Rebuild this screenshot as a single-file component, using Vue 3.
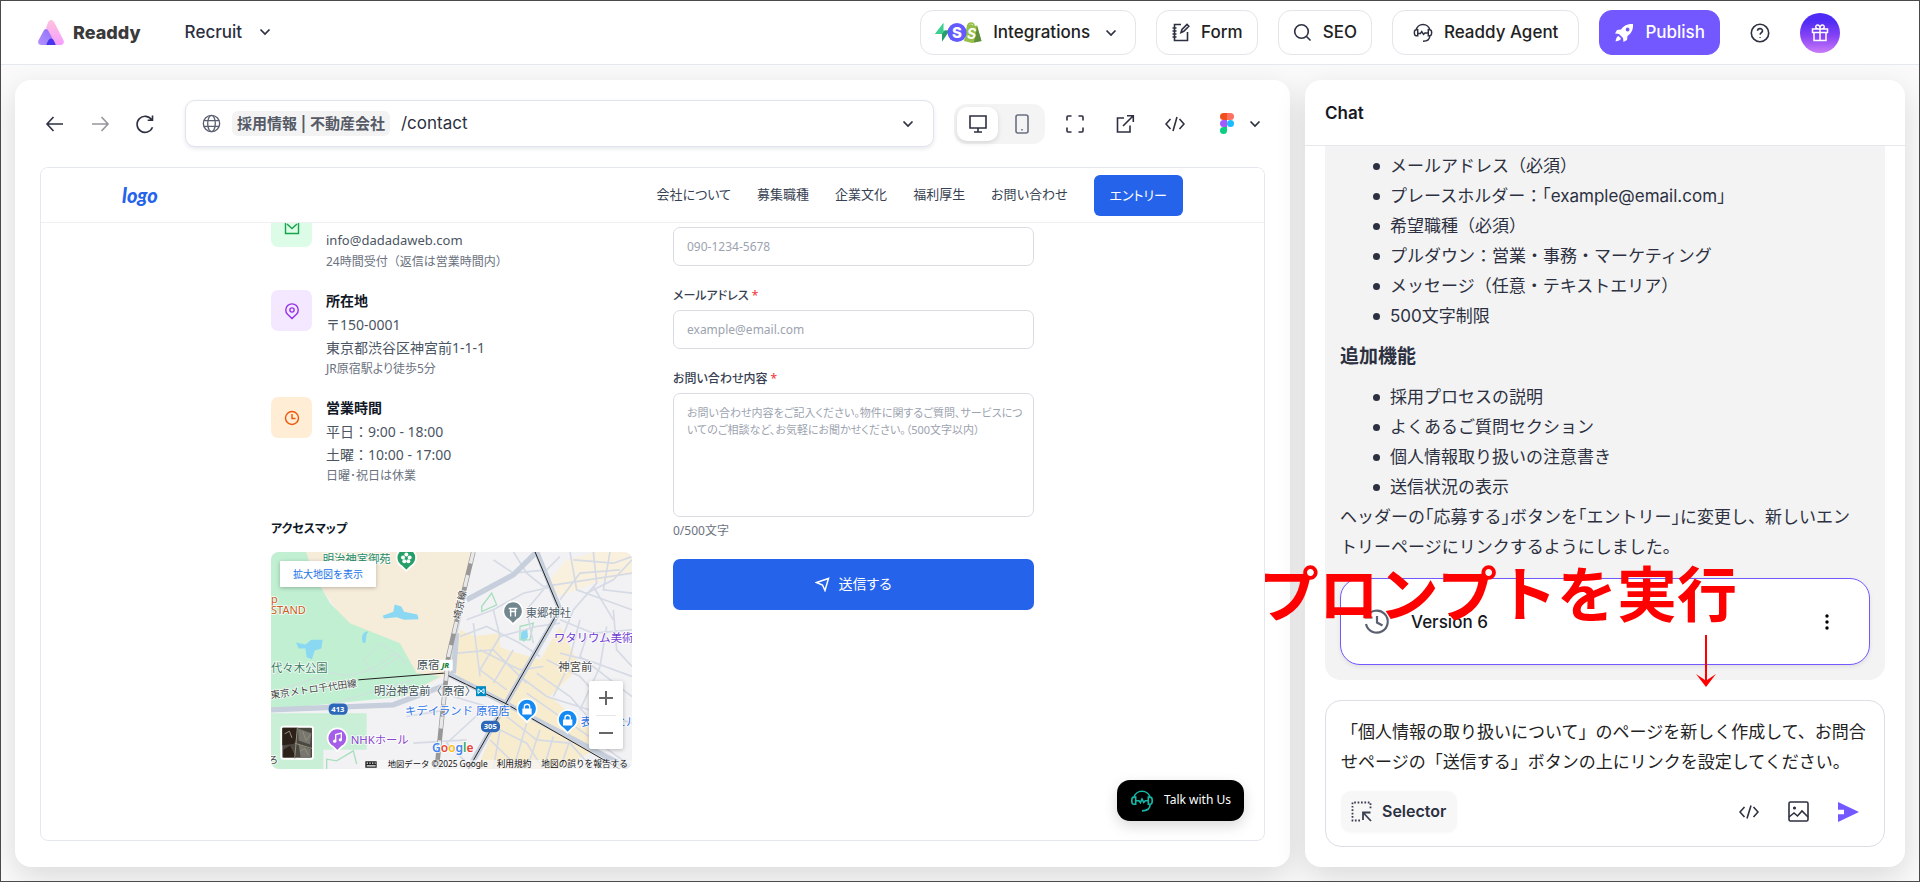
<script setup>
import { ref } from 'vue'

const prompt = ref('「個人情報の取り扱いについて」のページを新しく作成して、お問合せページの「送信する」ボタンの上にリンクを設定してください。')
const phone = ref('')
const email = ref('')
const message = ref('')

const nav = ['会社について', '募集職種', '企業文化', '福利厚生', 'お問い合わせ']
const formItems = ['メールアドレス（必須）', 'プレースホルダー：「example@email.com」', '希望職種（必須）', 'プルダウン：営業・事務・マーケティング', 'メッセージ（任意・テキストエリア）', '500文字制限']
const extras = ['採用プロセスの説明', 'よくあるご質問セクション', '個人情報取り扱いの注意書き', '送信状況の表示']

const streets = [
  'M640 126L600 330L560 490L530 778', 'M700 150L760 190L860 180L900 140', 'M760 126L800 190L850 230L1116 190',
  'M620 330L700 300L790 250L880 230', 'M930 126L950 240L1116 300', 'M1000 126L1010 220L940 300L900 400',
  'M1050 126L1030 240L1116 250', 'M1080 180L960 190L900 270', 'M600 380L680 350L780 400L840 440', 'M590 430L700 420L800 520',
  'M640 340L660 500', 'M700 300L720 380L660 480L740 540', 'M760 420L700 520', 'M900 330L1000 370L1116 360',
  'M900 430L980 450L1116 500', 'M960 330L920 480L880 560', 'M1040 350L1020 470L960 600', 'M860 450L960 500L1050 600',
  'M830 490L930 560L1000 640', 'M800 550L900 620L940 700', 'M780 500L860 560L1116 640', 'M700 650L800 700L850 778',
  'M740 620L830 690L930 700L1000 778', 'M690 690L780 778', 'M800 640L760 778', 'M840 660L800 778', 'M880 680L850 778',
  'M930 690L900 778', 'M580 560L680 590L560 700L640 778', 'M440 620L560 600', 'M460 700L620 690', 'M1060 300L1070 420L1116 470',
  'M1116 150L1060 210L980 250', 'M660 420L780 480L850 470', 'M720 380L830 350L900 340', 'M980 380L960 440L1116 560',
  'M850 240L800 300L820 400', 'M1000 230L1060 330', 'M940 150L1060 160L1116 140', 'M930 640L1116 770', 'M720 660L700 778'
]
</script>

<template>
  <div class="app">
    <header class="topbar">
      <a class="brand" href="#">
        <svg width="26" height="25" viewBox="0 0 26 25">
          <defs>
            <linearGradient id="lgPink" x1="0" y1="0" x2="0" y2="1"><stop offset="0" stop-color="#ffc2dd" /><stop offset="1" stop-color="#f59dff" /></linearGradient>
            <linearGradient id="lgVio" x1="0" y1="1" x2="1" y2="0"><stop offset="0" stop-color="#b592ff" /><stop offset="1" stop-color="#8b6cf6" /></linearGradient>
          </defs>
          <path d="M13 0c1.600 0 2.600 1 3.400 2.600l9 17.500c1.200 2.700-.2 4.900-2.800 4.900H18L8 8l2-5.400C10.600 1 11.600 0 13 0z" fill="url(#lgPink)" />
          <path d="M8 9c1.200 0 1.900.8 2.500 1.900L18 25H3.400C.7 25-.6 22.800.5 20.200l5-9.200C6.100 9.800 6.900 9 8 9z" fill="url(#lgVio)" />
          <path d="M13 18.500c2.200 0 3.400 3 4.700 6.500H8.300C9.600 21.500 10.800 18.500 13 18.500z" fill="#4a34ee" />
        </svg>
        <span>Readdy</span>
      </a>
      <button class="plain project">Recruit
        <svg class="chev" width="12" height="8" viewBox="0 0 12 8"><path d="M1.500 1.500L6 6l4.500-4.500" /></svg>
      </button>
      <div class="actions">
        <button class="pill">
          <svg width="47" height="21" viewBox="0 0 47 21">
            <path d="M8.500 1L0 12h6.500z" fill="#4ddba0" /><path d="M8.500 1L0 12h7V19.500l7.500-11H8.500z" fill="#3ecf8e" /><path d="M7 19.500L14.500 8.500H10L7 12z" fill="#259d6c" />
            <path d="M32 3l4-1 3 2 3-.5L46.500 19 37 21 29 19z" fill="#95bf47" /><path d="M42 3.500L46.500 19 39 20.500z" fill="#5e8e3e" />
            <path d="M33 4c0-4 6-4 6 0" fill="none" stroke="#95bf47" stroke-width="1.500" />
            <text x="32" y="17" font-size="14" font-weight="700" font-style="italic" fill="#fff">S</text>
            <circle cx="22" cy="10.500" r="9.500" fill="#635bff" />
            <text x="17" y="16" font-size="15" font-weight="800" fill="#fff">S</text>
          </svg>
          Integrations
          <svg class="chev end" width="12" height="8" viewBox="0 0 12 8"><path d="M1.500 1.500L6 6l4.500-4.500" /></svg>
        </button>
        <button class="pill">
          <svg class="ln" width="19" height="19" viewBox="0 0 19 19"><path d="M10 1.500H3.500v16h13V9M1.500 5h4M1.500 8h4M1.500 11h4M1.500 14h4M10 9.500l1-3 5-5 1.800 1.800-5 5z" /></svg>
          Form
        </button>
        <button class="pill">
          <svg class="ln" width="19" height="19" viewBox="0 0 19 19"><circle cx="8.500" cy="8.500" r="6.800" /><path d="M13.500 13.500l4 4" /></svg>
          SEO
        </button>
        <button class="pill agent">
          <svg class="ln" width="20" height="20" viewBox="0 0 22 22"><path d="M3.500 8a7.600 7.600 0 0 1 15 0M3.500 7.500C.8 7.500.8 14 3.500 14h1.700V7.500zM18.500 7.500c2.700 0 2.700 6.500 0 6.500h-1.700V7.500zM18.500 14c0 4-3 6-7.500 6M5.200 11.500h3l1.400-2 2 3 1.500-1.500h3.700" /></svg>
          Readdy Agent
        </button>
        <button class="pill publish">
          <svg width="20" height="20" viewBox="0 0 20 20" fill="#fff"><path fill-rule="evenodd" d="M19 1c-6-.5-9.500 2-12 5.500L3 7 1 10.500l4 .5 4 4 .5 4L13 17l.5-4C17 10.500 19.500 7 19 1zM13.600 4.600a1.900 1.900 0 1 1 0 3.800 1.900 1.900 0 0 1 0-3.800z" /><path d="M4.500 13C2.500 13.500 2 16 1.500 18.500 4 18 6.500 17.500 7 15.500z" /></svg>
          Publish
        </button>
        <button class="plain help" aria-label="Help">
          <svg class="ln" width="20" height="20" viewBox="0 0 20 20"><circle cx="10" cy="10" r="8.700" /><path d="M7.500 7.800c.2-3 5.200-2.800 5 .1-.1 1.700-2.300 1.800-2.400 3.700M10.100 14v.8" /></svg>
        </button>
        <button class="plain gift" aria-label="Rewards">
          <svg width="18" height="18" viewBox="0 0 18 18" fill="none" stroke="#fff" stroke-width="1.500"><path d="M1.500 5h15v3.500h-15zM3 8.500v8h12v-8M9 5v11.500M9 5C3 5 4.500 1 6.500 1S9 3 9 5c0-2 .5-4 2.500-4S15 5 9 5z" /></svg>
        </button>
      </div>
    </header>

    <main class="workspace">
      <section class="card left">
        <div class="toolbar">
          <button class="plain" aria-label="Back"><svg class="ln" width="20" height="18" viewBox="0 0 20 18"><path d="M18 9H2M8.500 2L2 9l6.500 7" /></svg></button>
          <button class="plain dim" aria-label="Forward"><svg class="ln" width="20" height="18" viewBox="0 0 20 18"><path d="M2 9h16M11.500 2L18 9l-6.500 7" /></svg></button>
          <button class="plain" aria-label="Reload"><svg class="ln" width="20" height="20" viewBox="0 0 20 20"><path d="M17.500 13.300A8 8 0 1 1 16.800 6M17.500 1.500V6.300H12.700" /></svg></button>
          <button class="url">
            <svg class="ln globe" width="19" height="19" viewBox="0 0 20 20"><circle cx="10" cy="10" r="8.600" /><ellipse cx="10" cy="10" rx="4" ry="8.600" /><path d="M2 7h16M2 13h16" /></svg>
            <span class="chip">採用情報 | 不動産会社</span>
            <span>/contact</span>
            <svg class="chev end" width="12" height="8" viewBox="0 0 12 8"><path d="M1.500 1.500L6 6l4.500-4.500" /></svg>
          </button>
          <div class="seg">
            <button class="plain on" aria-label="Desktop"><svg class="ln" width="20" height="20" viewBox="0 0 20 20"><path d="M2 2h16v12H2zM10 14v4M6 18h8" /></svg></button>
            <button class="plain" aria-label="Mobile"><svg class="ln grey" width="20" height="20" viewBox="0 0 20 20"><rect x="4" y="1" width="12" height="18" rx="2" /><path d="M10 15v1.500" /></svg></button>
          </div>
          <div class="tools">
            <button class="plain" aria-label="Full screen"><svg class="ln" width="20" height="20" viewBox="0 0 20 20"><path d="M2 6.500V3a1 1 0 0 1 1-1h3.500M13.500 2H17a1 1 0 0 1 1 1v3.500M18 13.500V17a1 1 0 0 1-1 1h-3.500M6.500 18H3a1 1 0 0 1-1-1v-3.500" /></svg></button>
            <button class="plain" aria-label="Open"><svg class="ln" width="20" height="20" viewBox="0 0 20 20"><path d="M9 4H2.500v14H15v-6.500M12 1.700h6.300V8M18 2L8 12" /></svg></button>
            <button class="plain" aria-label="Code"><svg class="ln" width="20" height="20" viewBox="0 0 20 20"><path d="M5.500 5L1 10l4.500 5M14.500 5l4.500 5-4.500 5M12 3L8 17" /></svg></button>
            <button class="plain figma" aria-label="Figma">
              <svg width="14" height="21" viewBox="0 0 14 21"><path d="M7 0H3.500a3.500 3.500 0 0 0 0 7H7z" fill="#f24e1e" /><path d="M7 0h3.500a3.500 3.500 0 0 1 0 7H7z" fill="#ff7262" /><path d="M7 7H3.500a3.500 3.500 0 0 0 0 7H7z" fill="#a259ff" /><circle cx="10.500" cy="10.500" r="3.500" fill="#1abcfe" /><path d="M7 14H3.500A3.500 3.500 0 1 0 7 17.500z" fill="#0acf83" /></svg>
              <svg class="chev" width="12" height="8" viewBox="0 0 12 8"><path d="M1.500 1.500L6 6l4.500-4.500" /></svg>
            </button>
          </div>
        </div>

        <div class="preview">
          <div class="site-head">
            <a class="site-logo" href="#">logo</a>
            <nav>
              <a v-for="n in nav" :key="n" href="#">{{ n }}</a>
              <a class="entry" href="#">エントリー</a>
            </nav>
          </div>
          <div class="site-body">
            <div class="info">
              <div class="item">
                <span class="tile green"><svg width="18" height="18" viewBox="0 0 18 18"><path d="M2.500 2.500h13v13h-13zM4 6l5 4.500L14 6" /></svg></span>
                <div class="untitled"><p>info@dadadaweb.com</p><small>24時間受付（返信は営業時間内）</small></div>
              </div>
              <div class="item">
                <span class="tile violet"><svg width="18" height="18" viewBox="0 0 18 18"><path d="M4.500 12.300a6.200 6.200 0 1 1 9 0L9 16.500z" /><circle cx="9" cy="8" r="2.100" /></svg></span>
                <div><h4>所在地</h4><p>〒150-0001<br>東京都渋谷区神宮前1-1-1</p><small class="kana">JR原宿駅より徒歩5分</small></div>
              </div>
              <div class="item">
                <span class="tile orange"><svg width="18" height="18" viewBox="0 0 18 18"><circle cx="9" cy="9" r="6.500" /><path d="M9 5v4.500h3.500" /></svg></span>
                <div><h4>営業時間</h4><p>平日：9:00 - 18:00<br>土曜：10:00 - 17:00</p><small class="kana">日曜･祝日は休業</small></div>
              </div>
              <h3 class="kana">アクセスマップ</h3>
              <div class="map">
                <svg class="canvas" viewBox="33 126 1083 652" preserveAspectRatio="xMidYMid slice">
                  <rect x="33" y="126" width="1083" height="652" fill="#f2f2f5" />
                  <path d="M130 126H640L570 490L430 560L430 450L250 330L180 230z" fill="#f6ecda" />
                  <path d="M33 126H138L160 190L210 280L270 340L420 400L470 490L540 500L430 560L33 600z" fill="#c0efd2" />
                  <path d="M33 610H320V720H190V778H33z" fill="#c9f0d7" />
                  <path d="M600 360L740 420L840 450L900 350L960 470L870 560L1040 700L900 778H650L730 590L570 480z" fill="#f8ecce" />
                  <path d="M860 220L920 150L1010 126H1116V190L1000 220L900 260z" fill="#faf0d8" opacity=".8" />
                  <path d="M630 380L720 370L720 420L860 480L800 570L640 520z" fill="#f8ecce" />
                  <path d="M368 318l32-12 4-22 20 6 8 16 40 8 4 14-44 2-22-8-38 4z M108 398l28 6 18-14 34 0-4 26-20 6-8 26-16-6-4-26-20 0z M306 385c0-14 10-22 20-20-10 8-6 20-10 34-8 2-10-6-10-14zM784 366l18-8 2 24-12 14-10-8z" fill="#8bd8f3" />
                  <g fill="none" stroke="#a8dfbe" stroke-width="4"><path d="M665 290l30-40 15 35-45 20zM780 350l40-10-10 50-30 0zM200 778v-30l30 5 50-30 10 40" /></g>
                  <g fill="none" stroke="#d4dde1" stroke-width="3"><path d="M40 500C140 420 200 520 300 490S400 390 440 470M310 450L360 400 420 440 340 490zM33 550L180 500 240 540M190 590L460 510" /></g>
                  <g fill="none" stroke="#d5dae4" stroke-width="5"><path v-for="(d, i) in streets" :key="i" :d="d" /></g>
                  <g fill="none" stroke="#c6cfdb" stroke-width="16"><path d="M33 600L400 585L560 525M620 270L760 195L830 126M830 126L900 300L735 585L625 778M560 490L735 580L1110 778M590 370L580 490" /></g>
                  <g fill="none" stroke="#222" stroke-width="3"><path d="M825 126L898 300L735 585L625 778M295 510L550 490L735 580L1080 778" /></g>
                  <path d="M640 126L605 270L565 440L530 778" fill="none" stroke="#989898" stroke-width="14" />
                  <path d="M640 126L605 270L565 440L530 778" fill="none" stroke="#e8e8e8" stroke-width="10" stroke-dasharray="36 36" />
                  <g class="lbl" font-size="34">
                    <text x="188" y="160" fill="#268c64">明治神宮御苑</text>
                    <text x="33" y="280" fill="#cc5c23" font-size="33">p</text><text x="33" y="313" fill="#cc5c23" font-size="33">STAND</text>
                    <text x="33" y="487" fill="#3b7d65">代々木公園</text>
                    <text x="470" y="477" fill="#3f5158">原宿</text>
                    <text x="342" y="555" fill="#3f5158">明治神宮前〈原宿〉</text>
                    <text x="797" y="322" fill="#51616b">東郷神社</text>
                    <text x="882" y="398" fill="#6e3bd1">ワタリウム美術</text>
                    <text x="895" y="485" fill="#4a4a4a">神宮前</text>
                    <text x="435" y="616" fill="#2f76e8">キデイランド 原宿店</text>
                    <text x="962" y="648" fill="#2f76e8">表参道ヒル</text>
                    <text x="272" y="702" fill="#8b45cf">NHKホール</text>
                    <text x="33" y="566" fill="#444" font-size="29" transform="rotate(-8 33 565)">東京メトロ千代田線</text>
                    <text x="600" y="330" fill="#444" font-size="29" transform="rotate(-77 600 330)">埼京線</text>
                    <text x="26" y="760" fill="#444" font-size="28">ろ</text>
                  </g>
                  <g stroke="#fff" stroke-width="5">
                    <path d="M439 183l-14-14a29 29 0 1 1 28 0z" fill="#259f68" /><path d="M759 343l-14-14a29 29 0 1 1 28 0z" fill="#73878f" />
                    <path d="M801 636l-14-14a29 29 0 1 1 28 0z" fill="#168af3" /><path d="M923 669l-14-14a29 29 0 1 1 28 0z" fill="#168af3" /><path d="M232 724l-14-14a29 29 0 1 1 28 0z" fill="#a55ee8" />
                  </g>
                  <g fill="#fff"><circle cx="439" cy="134" r="6" /><circle cx="429" cy="143" r="6" /><circle cx="449" cy="143" r="6" /><circle cx="433" cy="154" r="6" /><circle cx="445" cy="154" r="6" /><path d="M787 596h28v18h-28zM909 629h28v18h-28z" /></g>
                  <path d="M746 296h26M749 305h20M752 296v24M766 296v24M793 597v-7c0-9 16-9 16 0v7M915 630v-7c0-9 16-9 16 0v7M227 694v-20l17-4v19" fill="none" stroke="#fff" stroke-width="4" /><circle cx="224" cy="694" r="5" fill="#fff" /><circle cx="241" cy="690" r="5" fill="#fff" />
                  <rect x="540" y="450" width="38" height="32" fill="#fff" /><text x="545" y="475" font-size="23" font-weight="800" font-style="italic" fill="#14833b">JR</text>
                  <rect x="648" y="529" width="30" height="30" fill="#008bc5" /><path d="M654 537v14l9-7 9 7v-14l-9 7z" fill="none" stroke="#fff" stroke-width="3" />
                  <g font-size="23" font-weight="700" fill="#fff"><rect x="206" y="581" width="57" height="34" rx="14" fill="#2d68b8" /><text x="214" y="606">413</text><rect x="663" y="633" width="57" height="34" rx="14" fill="#2d68b8" /><text x="671" y="659">305</text></g>
                  <g class="lbl" font-size="36" font-weight="600"><text x="516" y="726"><tspan fill="#4285f4">G</tspan><tspan fill="#ea4335">o</tspan><tspan fill="#fbbc05">o</tspan><tspan fill="#4285f4">g</tspan><tspan fill="#34a853">l</tspan><tspan fill="#ea4335">e</tspan></text></g>
                  <rect x="300" y="750" width="816" height="28" fill="#f8f8f8" opacity=".65" />
                  <g fill="#222"><path fill-rule="evenodd" d="M316 754h34v20h-34zM320 758v4h4v-4zM328 758v4h4v-4zM336 758v4h4v-4zM344 758v4h3v-4zM320 766v4h27v-4z" /></g>
                  <g font-size="26" fill="#111"><text x="383" y="773" font-size="25">地図データ ©2025 Google</text><text x="710" y="773">利用規約</text><text x="844" y="773">地図の誤りを報告する</text></g>
                  <rect x="64" y="651" width="95" height="96" rx="6" fill="#4b4842" stroke="#fff" stroke-width="6" />
                  <path d="M67 654h46l-8 48-38 4zM70 720l20-12 18 34H70z" fill="#2b2119" /><path d="M114 656l40 14-4 34-34-12zM116 704l36 14v26h-30z" fill="#77766f" /><path d="M112 654l-8 92M104 700l52 16M74 672l14-8 8 20M128 664l10 28 14-18M120 724l14-8 12 20" fill="none" stroke="#94907a" stroke-width="3" />
                </svg>
                <a class="bigmap" href="#">拡大地図を表示</a>
                <div class="zoomer"><button class="plain" aria-label="Zoom in"><svg width="14" height="14" viewBox="0 0 14 14"><path d="M0 7h14M7 0v14" /></svg></button><button class="plain" aria-label="Zoom out"><svg width="14" height="14" viewBox="0 0 14 14"><path d="M0 7h14" /></svg></button></div>
              </div>
            </div>

            <form class="contact" @submit.prevent>
              <input v-model="phone" aria-label="Phone" placeholder="090-1234-5678">
              <label for="mail">メールアドレス <i>*</i></label>
              <input id="mail" v-model="email" type="email" placeholder="example@email.com">
              <label for="msg">お問い合わせ内容 <i>*</i></label>
              <textarea id="msg" v-model="message" placeholder="お問い合わせ内容をご記入ください。物件に関するご質問、サービスについてのご相談など、お気軽にお聞かせください。（500文字以内）"></textarea>
              <span class="count">0/500文字</span>
              <button class="submit"><svg width="15" height="15" viewBox="0 0 15 15" fill="none" stroke="#fff" stroke-width="1.500"><path d="M1.500 5.500L13.500 1.500 10 13.500 7.500 8z" /></svg>送信する</button>
            </form>
          </div>
          <button class="talk">
            <svg width="24" height="24" viewBox="0 0 22 22" fill="none" stroke="#14b8a6" stroke-width="1.500"><path d="M3.500 8a7.700 7.700 0 0 1 15 0M3.500 7.500C1 7.500 1 14 3.500 14h1.700V7.500zM18.500 7.500c2.500 0 2.500 6.500 0 6.500h-1.700V7.500zM18.500 14c0 4-3 6-7.500 6M5.200 10.800h3l1.300 1.700 1.500-3.200 1.600 3 1.500-1.500h2.700" /></svg>
            Talk with Us
          </button>
        </div>
      </section>

      <section class="card chat">
        <h2>Chat</h2>
        <div class="scroll">
          <article class="bubble">
            <ul>
              <li v-for="t in formItems" :key="t">
                <template v-for="(c, i) in t.split(/([「」])/)" :key="i"><span v-if="c === '「' || c === '」'" class="half">{{ c }}</span><template v-else>{{ c }}</template></template>
              </li>
            </ul>
            <h3>追加機能</h3>
            <ul><li v-for="t in extras" :key="t">{{ t }}</li></ul>
            <p>ヘッダーの<span class="half">「</span>応募する<span class="half">」</span>ボタンを<span class="half">「</span>エントリー<span class="half">」</span>に変更し、新しいエン<br>トリーページにリンクするようにしました。</p>
            <div class="version">
              <svg width="28" height="28" viewBox="0 0 28 28" fill="none" stroke="#5b6070" stroke-width="2.200"><path d="M4 8.500a11 11 0 1 1-1 7.500M3 3v6.500h6.500M14 8v6.500l5.500 3" /></svg>
              <span>Version 6</span>
              <button class="plain" aria-label="More"><svg width="4" height="16" viewBox="0 0 4 16"><circle cx="2" cy="2" r="1.700" /><circle cx="2" cy="8" r="1.700" /><circle cx="2" cy="14" r="1.700" /></svg></button>
            </div>
          </article>
        </div>
        <div class="composer">
          <textarea v-model="prompt" aria-label="Prompt" spellcheck="false"></textarea>
          <div class="row">
            <button class="selector">
              <svg width="21" height="21" viewBox="0 0 21 21" fill="none" stroke="#3a3f52" stroke-width="1.800"><path stroke-dasharray="1.700 1.700" d="M9 19.500H1.500V1.500H19.500V8" /><path d="M12 19v-7.500h7.500M12.500 12L20 20" /></svg>
              Selector
            </button>
            <button class="plain" aria-label="Insert code"><svg class="ln" width="20" height="20" viewBox="0 0 20 20"><path d="M5.500 5L1 10l4.500 5M14.500 5l4.500 5-4.500 5M12 3.500L8 16.500" /></svg></button>
            <button class="plain" aria-label="Insert image"><svg class="ln" width="21" height="21" viewBox="0 0 21 21"><rect x="1" y="1" width="19" height="19" rx="1.500" /><path d="M1 16l5-4 3.500 3 4.500-5 6 6" /><circle cx="6.500" cy="7" r=".8" /></svg></button>
            <button class="plain" aria-label="Send"><svg width="21" height="20" viewBox="0 0 21 20" fill="#7357ff"><path d="M0 0L21 10 0 20V12.200h6V7.800H0z" /></svg></button>
          </div>
        </div>
        <div class="callout">プロンプトを実行</div>
        <svg class="arrow" width="20" height="52" viewBox="0 0 20 52"><path d="M10 0v46" stroke="#f00" stroke-width="2" /><path d="M10 52L0 39l9 6h2l9-6z" fill="#f00" /></svg>
      </section>
    </main>
  </div>
</template>

<style>
body { overflow: hidden; }
</style>

<style scoped>
* { box-sizing: border-box; margin: 0; padding: 0; }
a { color: inherit; text-decoration: none; }
button, input, textarea { font: inherit; color: inherit; }
button { cursor: pointer; white-space: nowrap; }
svg { flex: none; display: block; }
.app { height: 100vh; display: flex; flex-direction: column; border: 1px solid #4a4a4a; background: #fafafa; color: #2c3040; font: 17px/1.2 Inter, "Noto Sans CJK JP", sans-serif; overflow: hidden; }
.plain { border: 0; background: none; display: flex; align-items: center; justify-content: center; }
.ln { fill: none; stroke: #2c3040; stroke-width: 1.600; }
.ln.grey { stroke: #6b7080; }
.chev { fill: none; stroke: #2c3040; stroke-width: 1.700; }
.end { margin-left: auto; }

.topbar { height: 64px; flex: none; display: flex; align-items: center; background: #fff; border-bottom: 1px solid #e6e8ef; padding: 0 79px 0 37px; }
.brand { display: flex; align-items: center; gap: 9px; font: 800 18px/24px Inter, sans-serif; color: #3a3a3a; }
.project { gap: 17px; margin-left: 44px; font-weight: 500; }
.actions { margin-left: auto; display: flex; align-items: center; gap: 20px; }
.pill { height: 45px; border: 1px solid #e4e5e9; border-radius: 13px; background: #fff; display: flex; align-items: center; gap: 11px; padding: 0 14px; font-size: 17px; font-weight: 500; color: #222; }
.pill .end { margin-left: 4px; margin-right: 4px; }
.pill.agent { padding: 0 20px; }
.publish { background: #7357ff; border-color: #7357ff; color: #fff; }
.help { width: 40px; height: 40px; }
.gift { width: 40px; height: 40px; border-radius: 50%; background: linear-gradient(#4f2bf5 20%, #8a45f5 60%, #c97bf8); }

.workspace { flex: 1; min-height: 0; display: grid; grid-template-columns: minmax(0, 1275fr) minmax(0, 600fr); gap: 15px; padding: 15px 14px 14px; }
.card { background: #fff; border-radius: 16px; box-shadow: 0 10px 30px rgba(0, 0, 0, .13); display: flex; flex-direction: column; min-height: 0; position: relative; }
.left { padding: 20px 25px 26px; }
.toolbar { display: flex; align-items: center; padding: 0 4px 0 5px; margin-bottom: 20px; gap: 25px; }
.dim { opacity: .5; }
.url { flex: 1; height: 47px; margin-left: 5px; border: 1px solid #dfe4ee; border-radius: 10px; background: #fff; box-shadow: 0 2px 4px rgba(30, 40, 80, .1); display: flex; align-items: center; gap: 11px; padding: 0 19px 0 16px; }
.url .globe { stroke: #5b6070; stroke-width: 1.400; }
.chip { background: #f3f3f4; border-radius: 6px; padding: 0 5px; font-size: 15px; line-height: 25px; font-weight: 600; color: #565a66; }
.seg { display: flex; background: #f4f4f5; border-radius: 12px; padding: 3px; gap: 3px; height: 40px; margin-left: -5px; }
.seg button { width: 41px; border-radius: 10px; }
.seg .on { background: #fff; box-shadow: 0 2px 5px rgba(0, 0, 0, .12); }
.tools { display: flex; align-items: center; gap: 30px; margin-left: -5px; }
.figma { gap: 15px; margin-left: 5px; }

.preview { flex: 1; min-height: 0; border: 1px solid #e5e8f0; border-radius: 8px; overflow: hidden; position: relative; font-family: "Noto Sans", "Noto Sans CJK JP", sans-serif; }
.site-head { position: relative; z-index: 1; height: 55px; margin-bottom: -17px; background: #fff; border-bottom: 1px solid #eff0f2; padding: 0 81px; display: flex; align-items: center; justify-content: space-between; }
.site-logo { color: #2563eb; font: italic 900 20px/24px Lato, cursive; }
.site-head nav { display: flex; align-items: center; gap: 26px; font-size: 13px; color: #374151; font-feature-settings: "palt"; }
.site-head .entry { background: #2563eb; color: #fff; border-radius: 6px; line-height: 41px; padding: 0 16px; }
.site-body { display: grid; grid-template-columns: 1fr 1fr; gap: 41px; padding: 0 230px; }
.item { display: flex; gap: 14px; margin-bottom: 20px; color: #4b5563; }
.untitled { padding-top: 22px; }
.tile { flex: none; width: 41px; height: 41px; border-radius: 7px; display: flex; align-items: center; justify-content: center; }
.tile svg { fill: none; stroke: currentColor; stroke-width: 1.400; }
.green { background: #dcfce7; color: #16a34a; }
.violet { background: #f3e8ff; color: #9333ea; }
.orange { background: #ffedd5; color: #ea580c; }
.item h4 { font-size: 14px; line-height: 22px; font-weight: 600; color: #111827; }
.item p { font-size: 14px; line-height: 23px; margin-top: 1px; }
.item .untitled p { font-size: 13px; }
.item small { display: block; font-size: 12px; line-height: 17px; margin-top: 1px; color: #6b7280; }
.kana { font-feature-settings: "palt"; }
.info h3 { font-size: 12px; line-height: 22px; font-weight: 600; color: #111827; margin: 34px 0 12px; }
.map { position: relative; height: 217px; border-radius: 8px; overflow: hidden; }
.canvas { width: 100%; height: 100%; }
.lbl text { stroke: #fff; stroke-width: 5; paint-order: stroke; stroke-opacity: .85; }
.bigmap { position: absolute; left: 9px; top: 9px; width: 96px; line-height: 26px; background: #fff; box-shadow: 0 1px 4px rgba(0, 0, 0, .25); text-align: center; color: #1a73e8; font-size: 10px; }
.zoomer { position: absolute; right: 9px; bottom: 20px; width: 34px; background: #fff; border-radius: 2px; box-shadow: 0 1px 4px rgba(0, 0, 0, .25); padding: 0 7px; }
.zoomer button { width: 20px; height: 34px; }
.zoomer button + button { border-top: 1px solid #e6e6e6; }
.zoomer svg { stroke: #666; stroke-width: 2; }
.contact { display: flex; flex-direction: column; padding-top: 21px; font-size: 12px; color: #374151; }
.contact label { line-height: 17px; margin: 21px 0 6px; font-weight: 500; font-feature-settings: "palt"; }
.contact i { color: #ef4444; font-style: normal; }
.contact input, .contact textarea { width: 100%; border: 1px solid #d9dde3; border-radius: 7px; padding: 0 13px; outline: 0; }
.contact input { height: 39px; }
.contact textarea { height: 124px; padding: 10px 8px 10px 13px; line-height: 17px; resize: none; overflow: hidden; font-size: 11px; font-feature-settings: "palt"; }
.contact ::placeholder { color: #9ca3af; opacity: 1; }
.count { line-height: 17px; margin: 5px 0 20px; color: #6b7280; }
.submit { height: 51px; border: 0; border-radius: 7px; background: #2563eb; color: #fff; font-size: 14px; display: flex; align-items: center; justify-content: center; gap: 8px; font-feature-settings: "palt"; }
.talk { position: absolute; right: 20px; bottom: 19px; height: 41px; border: 0; border-radius: 13px; background: #000; color: #fff; font-size: 12px; padding: 0 13px; display: flex; align-items: center; gap: 10px; box-shadow: 0 5px 14px rgba(0, 0, 0, .15); }

.chat { color: #2c3040; }
.chat h2 { font-size: 17px; line-height: 20px; font-weight: 600; color: #16181f; padding: 23px 20px 22px; border-bottom: 1px solid #e6e8ec; }
.scroll { flex: 1; min-height: 0; overflow: hidden; padding: 0 20px; display: flex; flex-direction: column; justify-content: flex-end; }
.bubble { background: #f3f3f4; border-radius: 0 0 16px 16px; padding: 15px; line-height: 30px; flex: none; }
.bubble ul { list-style: none; padding-left: 50px; }
.bubble li { position: relative; line-height: 30px; }
.bubble li::before { content: ""; position: absolute; left: -17px; top: 12px; width: 7px; height: 7px; border-radius: 50%; background: #2c3040; }
.bubble h3 { font-size: 19px; line-height: 30px; font-weight: 700; margin: 11px 0 10px; }
.half { font-feature-settings: "halt"; }
.version { margin-top: 16px; height: 87px; border: 1px solid #7357ff; border-radius: 20px; background: #fff; display: flex; align-items: center; gap: 20px; padding: 0 40px 0 22px; color: #15171e; font-weight: 500; box-shadow: 0 2px 4px rgba(0, 0, 0, .08); }
.version button { margin-left: auto; }
.composer { margin: 20px 20px 20px; border: 1px solid #dcdee6; border-radius: 16px; padding: 16px 15px 14px; }
.composer textarea { display: block; width: 100%; height: 60px; border: 0; outline: 0; resize: none; background: none; font-size: 17px; line-height: 30px; overflow: hidden; color: #222; }
.row { display: flex; align-items: center; gap: 29px; margin-top: 14px; padding-right: 10px; }
.selector { height: 41px; border: 0; border-radius: 10px; background: #f7f7f8; display: flex; align-items: center; gap: 10px; padding: 0 11px 0 10px; margin-right: auto; font-size: 16px; font-weight: 600; box-shadow: 0 1px 3px rgba(0, 0, 0, .04); }
.callout { position: absolute; right: 168px; top: 469px; color: #f00; font: 700 60px/84px "Noto Sans CJK JP", sans-serif; white-space: nowrap; }
.arrow { position: absolute; right: 189px; top: 555px; }
</style>
